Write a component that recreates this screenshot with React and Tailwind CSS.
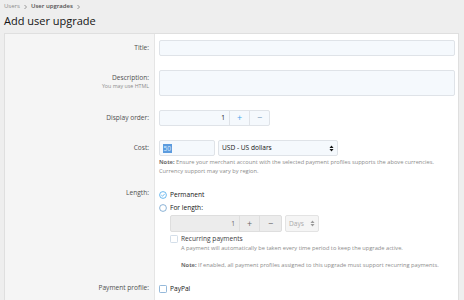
import React from 'react';

// small glyphs
const Chevron = () => (
    <svg width="5" height="6" viewBox="0 0 5 6" className="mx-[3px]">
        <path d="M1.5 1 L3.5 3 L1.5 5" fill="none" stroke="#8c8c8c" strokeWidth="0.9" />
    </svg>
);

const SelectArrows = ({ color = '#141414' }) => (
    <svg width="5" height="7" viewBox="0 0 5 7">
        <path d="M2.5 0.5 L4.5 3 L0.5 3 Z" fill={color} />
        <path d="M2.5 6.5 L4.5 4 L0.5 4 Z" fill={color} />
    </svg>
);

const RadioOn = () => (
    <svg width="8" height="8" viewBox="0 0 8 8">
        <circle cx="4" cy="4" r="3.4" fill="#fff" stroke="#47a7eb" strokeWidth="0.8" />
        <path d="M2.3 4.1 L3.5 5.2 L5.7 2.9" fill="none" stroke="#47a7eb" strokeWidth="0.8" />
    </svg>
);

const RadioOff = () => (
    <svg width="8" height="8" viewBox="0 0 8 8">
        <circle cx="4" cy="4" r="3.4" fill="#fff" stroke="#6f9fcc" strokeWidth="0.8" />
    </svg>
);

const Checkbox = ({ disabled }) => (
    <svg width="8" height="8" viewBox="0 0 8 8">
        <rect x="0.5" y="0.5" width="7" height="7" rx="0.8" fill="#fff" stroke={disabled ? '#c8d6e3' : '#7aa7d0'} strokeWidth="0.8" />
    </svg>
);

const Row = ({ label, hint, pt = 7, pb = 7, labelPt, children }) => (
    <div className="flex">
        <div
            className="w-[150px] shrink-0 bg-[#f5f5f5] border-r border-[#e5e5e5] text-right pr-[5px]"
            style={{ paddingTop: labelPt ?? pt + 3, paddingBottom: pb }}
        >
            <div className="text-[6.6px] leading-[10px] text-[#505050]">{label}</div>
            {hint && <div className="text-[5.3px] leading-[7px] text-[#8c8c8c]">{hint}</div>}
        </div>
        <div className="flex-1 pl-[4px] pr-[3px]" style={{ paddingTop: pt, paddingBottom: pb }}>
            {children}
        </div>
    </div>
);

export default function App() {
    return (
        <div className="w-[464px] h-[300px] overflow-hidden bg-[#eeeeee] font-['Open_Sans',sans-serif] text-[#141414]">
            <div className="px-1 pt-[2px]">
                <div className="flex items-center text-[6px] leading-[9px] text-[#8c8c8c]">
                    <span>Users</span>
                    <Chevron />
                    <span className="font-semibold text-[#505050]">User upgrades</span>
                    <Chevron />
                </div>
                <h1 className="text-[11px] leading-[18px] mt-[1px] text-[#141414]">Add user upgrade</h1>
            </div>

            <div className="ml-1 mt-[3px] w-[455px] border border-[#dfdfdf] bg-white">
                <Row label="Title:" pt={6}>
                    <div className="h-4 rounded-[2px] border border-[#dfe3e8] bg-[#f5f9fd]" />
                </Row>

                <Row label="Description:" hint="You may use HTML">
                    <div className="h-[26px] rounded-[2px] border border-[#dfe3e8] bg-[#f5f9fd]" />
                </Row>

                <Row label="Display order:">
                    <div className="flex h-4 w-[111px] rounded-[2px] border border-[#dfe3e8] bg-[#f5f9fd] text-[6.6px]">
                        <div className="flex-1 flex items-center justify-end pr-[4px] text-[#141414]">1</div>
                        <div className="w-5 flex items-center justify-center border-l border-[#dfe3e8] text-[9px] text-[#47a7eb]">+</div>
                        <div className="w-5 flex items-center justify-center border-l border-[#dfe3e8] text-[9px] text-[#7a9bb8]">−</div>
                    </div>
                </Row>

                <Row label="Cost:">
                    <div className="flex gap-[3px] text-[6.6px]">
                        <div className="h-4 w-[56px] flex items-center pl-[3px] rounded-[2px] border border-[#dfe3e8] bg-[#f5f9fd]">
                            <span className="bg-[#5b9bde] text-[#dfeeff] leading-[9px] px-[0.5px]">50</span>
                        </div>
                        <div className="h-4 w-[120px] flex items-center justify-between pl-[3px] pr-[3px] rounded-[2px] border border-[#dfe3e8] bg-[#f5f9fd]">
                            <span>USD - US dollars</span>
                            <SelectArrows />
                        </div>
                    </div>
                    <div className="mt-[2px] text-[5.7px] leading-[9px] text-[#8c8c8c]">
                        <span className="font-bold text-[#6e6e6e]">Note:</span> Ensure your merchant account with the selected payment profiles supports the above currencies.
                        <br />
                        Currency support may vary by region.
                    </div>
                </Row>

                <Row label="Length:" pt={5} pb={6} labelPt={5}>
                    <div className="flex items-center gap-[3px] h-[13px] text-[6.6px] leading-[13px]">
                        <RadioOn />
                        <span>Permanent</span>
                    </div>
                    <div className="flex items-center gap-[3px] h-[13px] text-[6.6px] leading-[13px]">
                        <RadioOff />
                        <span>For length:</span>
                    </div>
                    <div className="ml-[11px] mt-[1px] flex gap-[3px] text-[6.6px]">
                        <div className="flex h-[17px] w-[112px] rounded-[2px] border border-[#dedede] bg-[#ececec] text-[#666]">
                            <div className="flex-1 flex items-center justify-end pr-[4px]">1</div>
                            <div className="w-5 flex items-center justify-center border-l border-[#dedede] text-[9px]">+</div>
                            <div className="w-[22px] flex items-center justify-center border-l border-[#dedede] text-[9px]">−</div>
                        </div>
                        <div className="h-[17px] w-[34px] flex items-center justify-between px-[3px] rounded-[2px] border border-[#e3e3e3] bg-[#f5f5f5] text-[#aaaaaa]">
                            <span>Days</span>
                            <SelectArrows color="#999" />
                        </div>
                    </div>
                    <div className="ml-[11px] mt-[2px] flex items-center gap-[3px] h-[10px] text-[6.6px] leading-[10px] text-[#3c3c3c]">
                        <Checkbox disabled />
                        <span>Recurring payments</span>
                    </div>
                    <div className="ml-[22px] text-[5.7px] leading-[8px] text-[#8c8c8c]">
                        A payment will automatically be taken every time period to keep the upgrade active.
                    </div>
                    <div className="ml-[22px] mt-[9px] text-[5.7px] leading-[8px] text-[#8c8c8c]">
                        <span className="font-bold text-[#6e6e6e]">Note:</span> If enabled, all payment profiles assigned to this upgrade must support recurring payments.
                    </div>
                </Row>

                <Row label="Payment profile:" pt={7} labelPt={8}>
                    <div className="flex items-center gap-[3px] h-[13px] text-[6.6px] leading-[13px]">
                        <Checkbox />
                        <span>PayPal</span>
                    </div>
                </Row>
            </div>
        </div>
    );
}
